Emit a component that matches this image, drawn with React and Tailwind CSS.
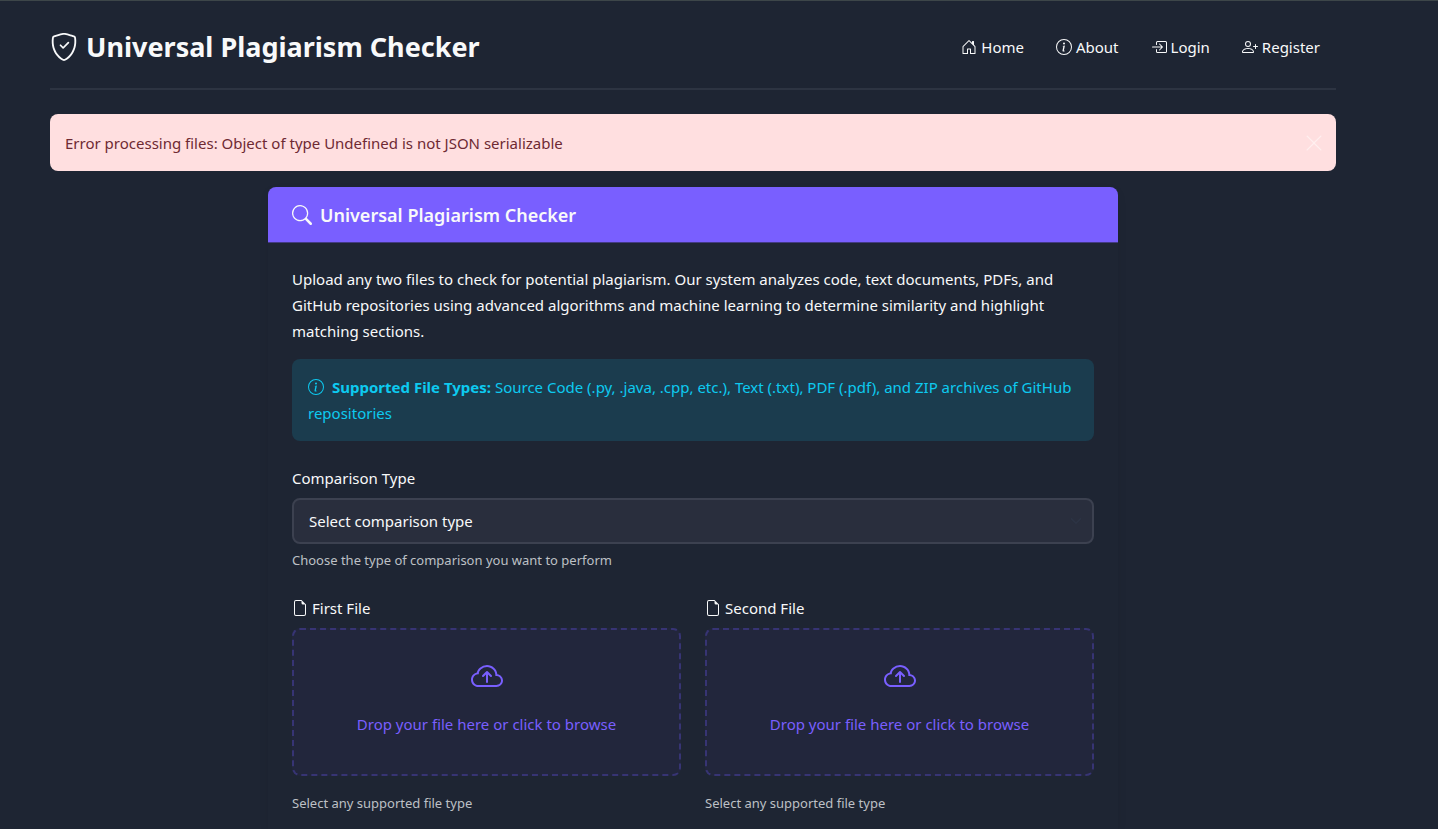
import { useState } from "react";
import {
  BsShieldCheck,
  BsHouseDoor,
  BsInfoCircle,
  BsBoxArrowInRight,
  BsPersonPlus,
  BsSearch,
  BsFileEarmark,
  BsCloudArrowUp,
  BsXLg,
} from "react-icons/bs";

const links = [
  { label: "Home", icon: BsHouseDoor },
  { label: "About", icon: BsInfoCircle },
  { label: "Login", icon: BsBoxArrowInRight },
  { label: "Register", icon: BsPersonPlus },
];

function Header() {
  return (
    <header className="flex items-center justify-between border-b-2 border-[#2d3442] pt-6 pb-5">
      <h1 className="flex items-center gap-2 text-[27px] leading-[43px] font-bold">
        <BsShieldCheck className="size-7" />
        Universal Plagiarism Checker
      </h1>
      <nav className="flex gap-8 pr-4">
        {links.map(({ label, icon: Icon }) => (
          <a key={label} href="#" className="flex items-center gap-1">
            <Icon className="size-4" />
            {label}
          </a>
        ))}
      </nav>
    </header>
  );
}

function Alert({ onClose }) {
  return (
    <div
      role="alert"
      className="mt-6 flex items-center justify-between rounded-lg bg-[#ffdfe0] pt-[17px] pr-3 pb-4 pl-[15px] leading-6 text-[#6e2a33]"
    >
      Error processing files: Object of type Undefined is not JSON serializable
      <button type="button" aria-label="Close" onClick={onClose} className="text-[#ffefef]">
        <BsXLg className="size-5" />
      </button>
    </div>
  );
}

function DropZone({ id, title }) {
  return (
    <div className="flex flex-col">
      <label htmlFor={id} className="flex items-center gap-1">
        <BsFileEarmark className="size-4" />
        {title}
      </label>
      <label
        htmlFor={id}
        className="mt-[7px] flex h-[148px] cursor-pointer flex-col items-center rounded-lg border-2 border-dashed border-[#373474] bg-[#22263c] pt-[31px] text-[#795fff]"
      >
        <BsCloudArrowUp className="size-8" />
        <span className="mt-[18px]">Drop your file here or click to browse</span>
      </label>
      <input id={id} type="file" className="sr-only" />
      <p className="mt-4 text-[13px] leading-[22px] text-[#bdc0c5]">Select any supported file type</p>
    </div>
  );
}

export default function App() {
  const [alertOpen, setAlertOpen] = useState(true);

  return (
    <div className="flex min-h-screen flex-col border-t border-[#3d4649] bg-[#1e2533] pr-[102px] pl-[50px] font-['Noto_Sans','Open_Sans',sans-serif] text-[15px] leading-[26px] text-[#f8f9fa]">
      <Header />
      {alertOpen && <Alert onClose={() => setAlertOpen(false)} />}
      <main className="mx-auto mt-4 w-full max-w-[850px] flex-1 rounded-t-lg shadow-[0_4px_10px_rgba(0,0,0,0.08)]">
        <h2 className="flex h-14 items-center gap-2 rounded-t-lg border-b border-[#433b83] bg-[#795fff] px-6 text-lg font-semibold">
          <BsSearch className="size-5" />
          Universal Plagiarism Checker
        </h2>
        <div className="px-6 pt-[23px]">
          <p>
            Upload any two files to check for potential plagiarism. Our system analyzes code, text documents, PDFs, and
            GitHub repositories using advanced algorithms and machine learning to determine similarity and highlight
            matching sections.
          </p>
          <div className="mt-[15px] rounded-lg bg-[#1b3c4e] px-4 py-[15px] text-[#0dcaf0]">
            <BsInfoCircle className="mr-2 inline size-4 align-[-2px]" />
            <strong className="font-bold">Supported File Types:</strong> Source Code (.py, .java, .cpp, etc.), Text
            (.txt), PDF (.pdf), and ZIP archives of GitHub repositories
          </div>
          <form className="mt-6">
            <label htmlFor="comparison" className="block">
              Comparison Type
            </label>
            <div className="mt-[7px] grid items-center">
              <select
                id="comparison"
                className="col-start-1 row-start-1 h-[46px] w-full appearance-none rounded-lg border-2 border-[#3c4150] bg-[#292e3d] px-[15px]"
              >
                <option>Select comparison type</option>
              </select>
              <svg
                viewBox="0 0 16 16"
                className="pointer-events-none col-start-1 row-start-1 mr-3 size-3 justify-self-end fill-none stroke-[#2d3445] stroke-2"
                aria-hidden="true"
              >
                <path d="m2 5 6 6 6-6" strokeLinecap="round" strokeLinejoin="round" />
              </svg>
            </div>
            <p className="mt-[5px] text-[13px] leading-[22px] text-[#bdc0c5]">
              Choose the type of comparison you want to perform
            </p>
            <div className="mt-6 grid grid-cols-2 gap-6">
              <DropZone id="first-file" title="First File" />
              <DropZone id="second-file" title="Second File" />
            </div>
          </form>
        </div>
      </main>
    </div>
  );
}
